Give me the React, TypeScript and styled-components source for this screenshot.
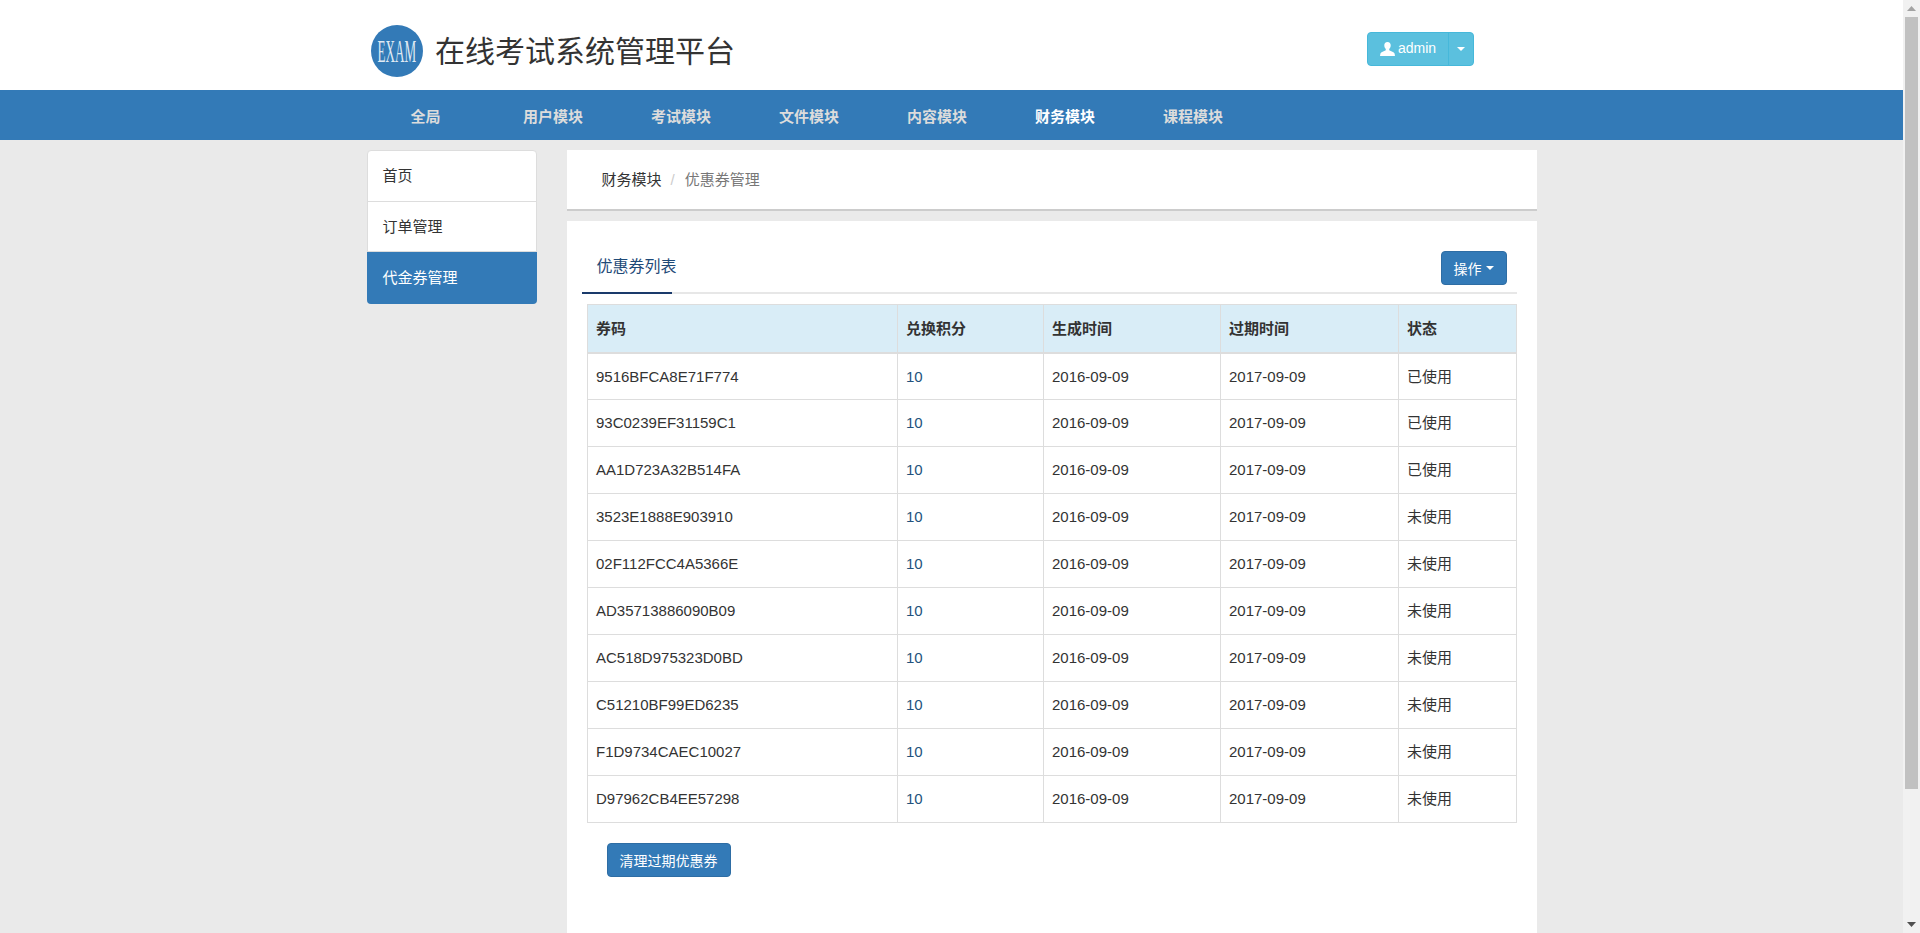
import React from "react";
import styled, { createGlobalStyle } from "styled-components";

const Global = createGlobalStyle`
  html, body { margin: 0; padding: 0; height: 100%; overflow: hidden; }
  body {
    font-family: "Liberation Sans", "Noto Sans CJK SC", sans-serif;
    font-size: 15px;
    line-height: 1.42857;
    color: #333;
    background: #eaeaea;
  }
  * { box-sizing: border-box; }
`;

const Page = styled.div`
  display: flex;
  width: 100%;
  height: 933px;
  overflow: hidden;
`;
const Main = styled.div`
  flex: 1;
  min-width: 0;
  display: flex;
  flex-direction: column;
`;
const Header = styled.header`
  height: 90px;
  flex: none;
  background: #fff;
`;
const Container = styled.div`
  width: 1170px;
  margin: 0 auto;
`;
const HeaderRow = styled(Container)`
  height: 100%;
  display: flex;
  align-items: flex-start;
  justify-content: space-between;
  padding: 25px 62.5px 0 4.5px;
`;
const Brand = styled.div`
  display: flex;
  align-items: flex-start;
  gap: 12px;
`;
const Title = styled.h1`
  margin: 7px 0 0;
  font-size: 30px;
  font-weight: 400;
  line-height: 40px;
  white-space: nowrap;
  color: #333;
`;
const SplitButton = styled.div`
  display: flex;
  height: 34px;
  margin-top: 7px;
  border: 1px solid #46b8da;
  border-radius: 4px;
  background: #5bc0de;
  color: #fff;
  font-size: 14px;
`;
const AdminLabel = styled.div`
  width: 81px;
  display: flex;
  align-items: center;
  gap: 3px;
  padding-left: 12px;
  border-right: 1px solid #46b8da;
`;
const CaretCell = styled.div`
  width: 24px;
  display: flex;
  align-items: center;
  justify-content: center;
`;
const Caret = styled.span`
  display: inline-block;
  width: 0;
  height: 0;
  border-top: 4px solid #fff;
  border-left: 4px solid transparent;
  border-right: 4px solid transparent;
`;
const NavBar = styled.nav`
  height: 50px;
  flex: none;
  background: #337ab7;
`;
const NavList = styled.div`
  display: flex;
  margin-left: -4.5px;
`;
const NavItem = styled.a<{ $active?: boolean }>`
  width: 128px;
  height: 50px;
  display: flex;
  align-items: center;
  justify-content: center;
  padding-top: 4px;
  font-size: 15px;
  font-weight: 700;
  color: ${(p) => (p.$active ? "#fff" : "#dcdcdc")};
  &:first-child { width: 127px; }
`;
const Content = styled(Container)`
  flex: 1;
  min-height: 0;
  display: flex;
  align-items: stretch;
  gap: 30px;
  padding-top: 10px;
`;
const Sidebar = styled.aside`
  width: 170px;
  flex: none;
  align-self: flex-start;
  background: #fff;
  border: 1px solid #ddd;
  border-radius: 4px;
`;
const SideItem = styled.a<{ $active?: boolean; $h: number }>`
  display: block;
  height: ${(p) => p.$h}px;
  padding: 0 15px;
  line-height: ${(p) => (p.$active ? "51px" : "49px")};
  font-size: 15px;
  color: ${(p) => (p.$active ? "#fff" : "#333")};
  background: ${(p) => (p.$active ? "#337ab7" : "transparent")};
  border-bottom: ${(p) => (p.$active ? "0" : "1px solid #ddd")};
  ${(p) => p.$active && "margin: 0 -1px -1px; padding-left: 16px; border-radius: 0 0 4px 4px;"}
`;
const Column = styled.main`
  width: 970px;
  flex: none;
  display: flex;
  flex-direction: column;
  gap: 10px;
`;
const Crumbs = styled.div`
  height: 61px;
  flex: none;
  display: flex;
  align-items: center;
  padding: 0 35px;
  background: #fff;
  border-bottom: 2px solid #ccc;
  font-size: 15px;
`;
const CrumbSep = styled.span`
  color: #ccc;
  padding: 0 10px 0 9px;
`;
const CrumbActive = styled.span`
  color: #777;
`;
const Panel = styled.section`
  flex: 1;
  background: #fff;
  padding: 30px 20px 0 15px;
`;
const TabBar = styled.div`
  height: 43px;
  display: flex;
  justify-content: space-between;
  align-items: flex-start;
  padding-right: 10px;
  border-bottom: 2px solid #e7e7e7;
`;
const Tab = styled.div`
  width: 90px;
  height: 43px;
  padding: 4px 0 0 15px;
  line-height: 24px;
  font-size: 16px;
  white-space: nowrap;
  color: #1f4a78;
  border-bottom: 2px solid #1a3a6b;
`;
const PrimaryButton = styled.button`
  height: 34px;
  padding: 0 12px;
  border: 1px solid #2e6da4;
  border-radius: 4px;
  background: #337ab7;
  color: #fff;
  font-family: inherit;
  font-size: 14px;
  display: inline-flex;
  align-items: center;
  gap: 4px;
`;
const Table = styled.table`
  width: 929px;
  margin: 10px 0 0 5.5px;
  border-collapse: collapse;
  table-layout: fixed;
`;
const Th = styled.th<{ $w: number }>`
  width: ${(p) => p.$w}px;
  height: 48px;
  padding: 0 8px;
  text-align: left;
  font-size: 15px;
  font-weight: 700;
  background: #d9edf7;
  border: 1px solid #ddd;
  border-bottom: 2px solid #ddd;
`;
const Td = styled.td<{ $link?: boolean }>`
  height: 47px;
  padding: 0 8px;
  font-size: 15px;
  border: 1px solid #ddd;
  color: ${(p) => (p.$link ? "#23527c" : "#333")};
`;
const FooterAction = styled.div`
  margin: 20px 0 0 25px;
`;
const Scrollbar = styled.div`
  width: 17px;
  flex: none;
  display: flex;
  flex-direction: column;
  align-items: center;
  background: #f1f1f1;
`;
const ArrowBox = styled.div<{ $grow?: boolean }>`
  height: 17px;
  flex: none;
  display: flex;
  align-items: center;
  justify-content: center;
  ${(p) => p.$grow && "margin-top: auto;"}
`;
const Thumb = styled.div`
  width: 13px;
  height: 772px;
  flex: none;
  background: #c1c1c1;
`;

const navs = ["全局", "用户模块", "考试模块", "文件模块", "内容模块", "财务模块", "课程模块"];
const codes: [string, string][] = [
  ["9516BFCA8E71F774", "已使用"],
  ["93C0239EF31159C1", "已使用"],
  ["AA1D723A32B514FA", "已使用"],
  ["3523E1888E903910", "未使用"],
  ["02F112FCC4A5366E", "未使用"],
  ["AD35713886090B09", "未使用"],
  ["AC518D975323D0BD", "未使用"],
  ["C51210BF99ED6235", "未使用"],
  ["F1D9734CAEC10027", "未使用"],
  ["D97962CB4EE57298", "未使用"],
];

const Logo = () => (
  <svg width="52" height="52" viewBox="0 0 52 52">
    <circle cx="26" cy="26" r="26" fill="#337ab7" />
    <g transform="scale(0.41 1)">
      <text x="16" y="37" fontFamily="'Liberation Serif', serif" fontSize="32" fill="#dfe9f3">
        EXAM
      </text>
    </g>
  </svg>
);

const UserIcon = () => (
  <svg width="15" height="14" viewBox="0 0 14 14" preserveAspectRatio="none">
    <path
      d="M7 0C5 0 4 1.4 4 3.3c0 1.6.6 3 1.4 3.8v1.2C3.8 9.4.8 10 .4 11.4L0 14h14l-.4-2.6c-.4-1.4-3.4-2-5-3.1V7.100C9.400 6.300 10 4.900 10 3.300 10 1.400 9 0 7 0z"
      fill="#fff"
    />
  </svg>
);

const ArrowUp = () => (
  <svg width="9" height="5" viewBox="0 0 9 5">
    <path d="M4.500 0L9 5H0z" fill="#a3a3a3" />
  </svg>
);
const ArrowDown = () => (
  <svg width="9" height="5" viewBox="0 0 9 5">
    <path d="M0 0h9L4.500 5z" fill="#505050" />
  </svg>
);

export default function App() {
  return (
    <>
      <Global />
      <Page>
        <Main>
          <Header>
            <HeaderRow>
              <Brand>
                <Logo />
                <Title>在线考试系统管理平台</Title>
              </Brand>
              <SplitButton>
                <AdminLabel>
                  <UserIcon />
                  admin
                </AdminLabel>
                <CaretCell>
                  <Caret />
                </CaretCell>
              </SplitButton>
            </HeaderRow>
          </Header>
          <NavBar>
            <Container>
              <NavList>
                {navs.map((n) => (
                  <NavItem key={n} $active={n === "财务模块"}>
                    {n}
                  </NavItem>
                ))}
              </NavList>
            </Container>
          </NavBar>
          <Content>
            <Sidebar>
              <SideItem $h={51}>首页</SideItem>
              <SideItem $h={50}>订单管理</SideItem>
              <SideItem $active $h={52}>
                代金券管理
              </SideItem>
            </Sidebar>
            <Column>
              <Crumbs>
                <span>财务模块</span>
                <CrumbSep>/</CrumbSep>
                <CrumbActive>优惠券管理</CrumbActive>
              </Crumbs>
              <Panel>
                <TabBar>
                  <Tab>优惠券列表</Tab>
                  <PrimaryButton>
                    操作 <Caret />
                  </PrimaryButton>
                </TabBar>
                <Table>
                  <thead>
                    <tr>
                      <Th $w={310}>券码</Th>
                      <Th $w={146}>兑换积分</Th>
                      <Th $w={177}>生成时间</Th>
                      <Th $w={178}>过期时间</Th>
                      <Th $w={118}>状态</Th>
                    </tr>
                  </thead>
                  <tbody>
                    {codes.map(([code, state]) => (
                      <tr key={code}>
                        <Td>{code}</Td>
                        <Td $link>10</Td>
                        <Td>2016-09-09</Td>
                        <Td>2017-09-09</Td>
                        <Td>{state}</Td>
                      </tr>
                    ))}
                  </tbody>
                </Table>
                <FooterAction>
                  <PrimaryButton>清理过期优惠券</PrimaryButton>
                </FooterAction>
              </Panel>
            </Column>
          </Content>
        </Main>
        <Scrollbar>
          <ArrowBox>
            <ArrowUp />
          </ArrowBox>
          <Thumb />
          <ArrowBox $grow>
            <ArrowDown />
          </ArrowBox>
        </Scrollbar>
      </Page>
    </>
  );
}
